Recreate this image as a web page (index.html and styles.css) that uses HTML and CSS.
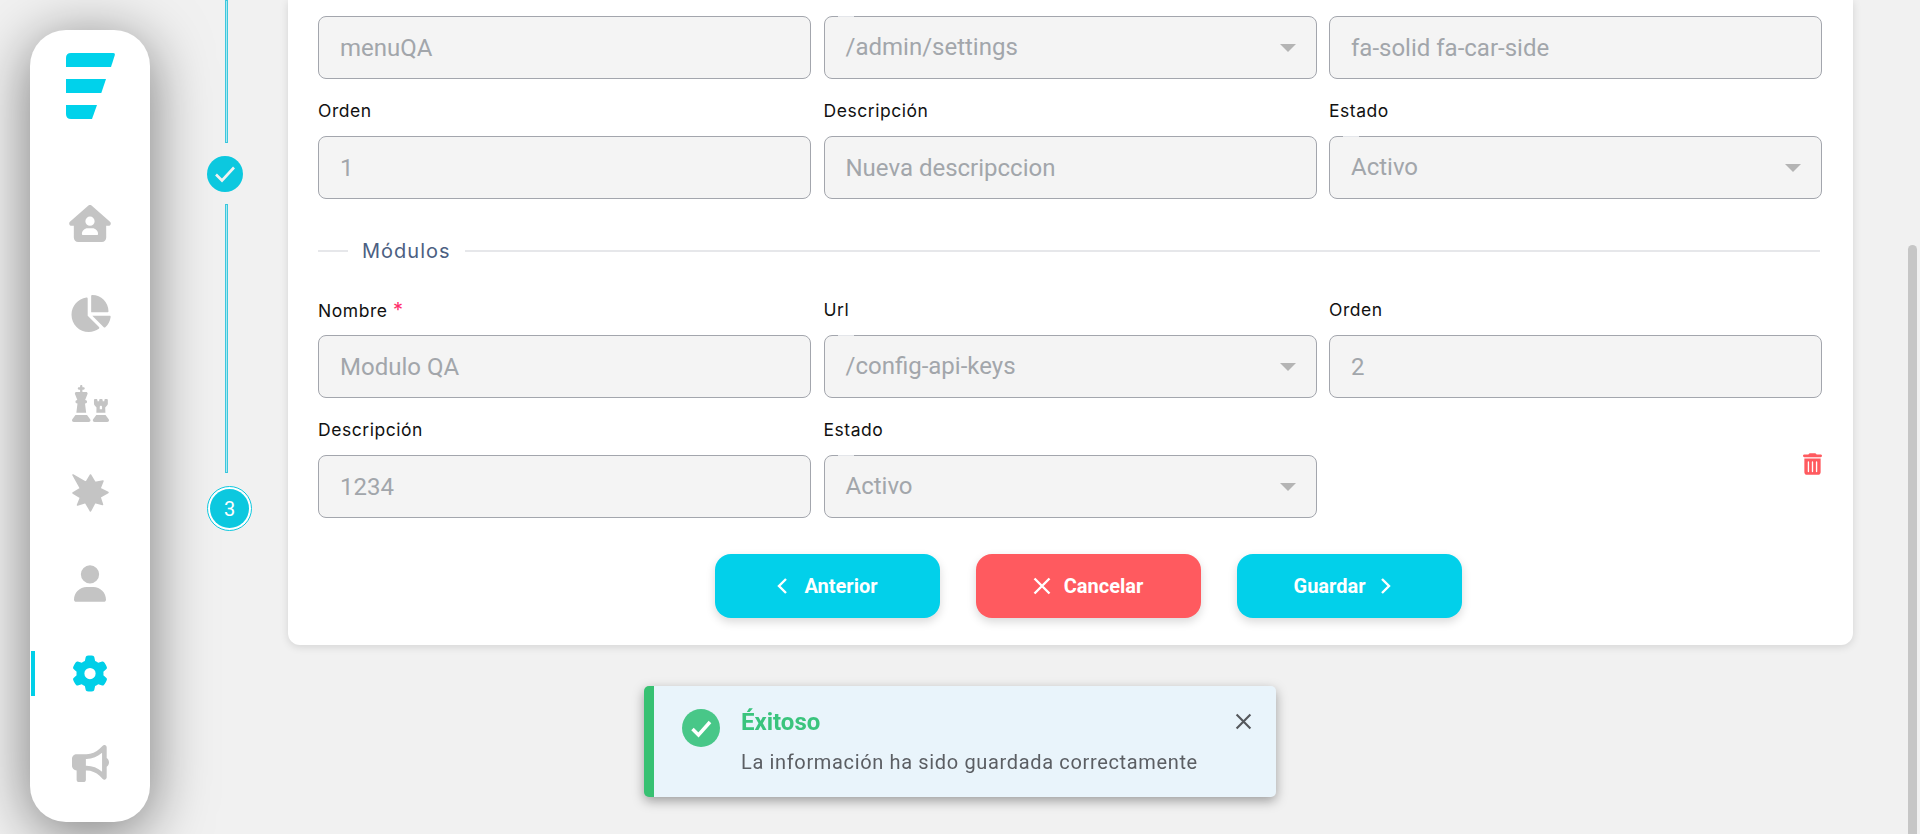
FILE: index.html
```html
<!DOCTYPE html>
<html lang="es">
<head>
  <meta charset="UTF-8">
  <meta name="viewport" content="width=device-width, initial-scale=1.0">
  <title>Configuración de menús</title>
  <link rel="stylesheet" href="styles.css">
</head>
<body>
  <div class="app">
    <!-- Menu lateral -->
    <aside class="sidebar">
      <svg class="logo" viewBox="0 0 49 66">
        <path d="M5 0H47Q49.500 0 48.700 2.500L45 14H0V5Q0 0 5 0Z"/>
        <path d="M0 26H40L35.300 40H0Z"/>
        <path d="M0 52H31L26 66H5Q0 66 0 61Z"/>
      </svg>
      <nav class="nav">
        <a class="nav-item"><svg class="icon-home" viewBox="0 0 576 512"><path d="M575.800 255.500c0 18-15 32.100-32 32.100h-32l.7 160.200c.2 35.500-28.500 64.300-64 64.300H128.100c-35.300 0-64-28.700-64-64V287.600H32c-18 0-32-14-32-32.100c0-9 3-17 10-24L266.400 8c7-7 15-8 22-8s15 2 21 7L564.800 231.500c8 7 12 15 11 24zM352 224a64 64 0 1 0 -128 0 64 64 0 1 0 128 0zm-96 96c-44.200 0-80 35.800-80 80c0 8.800 7.200 16 16 16H384c8.800 0 16-7.200 16-16c0-44.200-35.800-80-80-80H256z"/></svg></a>
        <a class="nav-item"><svg class="icon-pie" viewBox="0 0 576 512"><path d="M304 240V16.600c0-9 7-16.600 16-16.600C443.700 0 544 100.300 544 224c0 9-7.600 16-16.600 16H304zM32 272C32 150.700 122.100 50.300 239 34.300c9.200-1.300 17 6.100 17 15.400V288L412.500 444.500c6.700 6.700 6.200 17.700-1.500 23.100C371.800 495.600 323.800 512 272 512C139.500 512 32 404.600 32 272zm526.400 16c9.300 0 16.600 7.800 15.400 17c-7.700 55.900-34.600 105.600-73.900 142.300c-6 5.600-15.400 5.200-21.200-.7L320 288H558.400z"/></svg></a>
        <a class="nav-item"><svg class="icon-chess" viewBox="0 0 512 512"><path d="M144 16c0-8.800-7.200-16-16-16s-16 7.200-16 16V32H96c-8.800 0-16 7.200-16 16s7.200 16 16 16h16V96H60.200C49.100 96 40 105.100 40 116.200c0 2.500 .5 4.900 1.300 7.300L73.800 208H72c-13.300 0-24 10.700-24 24s10.700 24 24 24h4L60 384H196L180 256h4c13.300 0 24-10.700 24-24s-10.700-24-24-24h-1.800l32.500-84.500c.9-2.300 1.300-4.800 1.300-7.300c0-11.200-9.100-20.200-20.200-20.200H144V64h16c8.800 0 16-7.200 16-16s-7.200-16-16-16H144V16zM48 416L4.800 473.600C1.700 477.800 0 482.800 0 488c0 13.300 10.700 24 24 24H232c13.300 0 24-10.700 24-24c0-5.200-1.700-10.200-4.800-14.400L208 416H48zm288 0l-43.200 57.600c-3.100 4.200-4.800 9.200-4.800 14.400c0 13.300 10.700 24 24 24H488c13.300 0 24-10.700 24-24c0-5.200-1.700-10.200-4.800-14.400L464 416H336zM304 208v51.900c0 7.800 2.800 15.300 8 21.100L339.200 312 337 384H462.500l-3.300-72 28.300-30.800c5.400-5.900 8.500-13.600 8.500-21.700V208c0-8.800-7.200-16-16-16H464c-8.800 0-16 7.200-16 16v16H424V208c0-8.800-7.200-16-16-16H392c-8.800 0-16 7.200-16 16v16H352V208c0-8.800-7.200-16-16-16H320c-8.800 0-16 7.200-16 16zm80 96c0-8.800 7.200-16 16-16s16 7.200 16 16v32H384V304z"/></svg></a>
        <a class="nav-item"><svg class="icon-burst" viewBox="0 0 37 38"><path d="M1 1L14 8.500L18.500 1L23 8.500L31 7L28 14.500L36 18.500L28 23L30.500 30.500L23 28.500L18.500 37L13.500 28.500L5.500 31L8.500 23.500L1 19L8.500 14.500Z"/></svg></a>
        <a class="nav-item"><svg class="icon-user" viewBox="0 0 448 512"><path d="M224 256A128 128 0 1 0 224 0a128 128 0 1 0 0 256zm-45.700 48C79.800 304 0 383.800 0 482.300C0 498.700 13.300 512 29.700 512H418.300c16.400 0 29.700-13.300 29.700-29.700C448 383.800 368.200 304 269.700 304H178.300z"/></svg></a>
        <a class="nav-item active"><svg class="icon-gear" viewBox="0 0 512 512"><path d="M495.900 166.600c3.200 8.700 .5 18.400-6.400 24.600l-43.300 39.400c1.100 8.300 1.700 16.800 1.700 25.400s-.6 17.100-1.700 25.400l43.300 39.400c6.900 6.200 9.600 15.900 6.400 24.600c-4.400 11.900-9.700 23.300-15.800 34.300l-4.700 8.100c-6.600 11-14 21.400-22.100 31.200c-5.900 7.200-15.700 9.600-24.500 6.800l-55.700-17.700c-13.400 10.300-28.200 18.900-44 25.400l-12.500 57.100c-2 9.100-9 16.300-18.200 17.800c-13.800 2.300-28 3.500-42.500 3.500s-28.700-1.200-42.500-3.500c-9.200-1.500-16.200-8.700-18.200-17.800l-12.500-57.100c-15.800-6.500-30.600-15.100-44-25.400L83.100 425.900c-8.800 2.800-18.600 .3-24.500-6.800c-8.100-9.800-15.500-20.200-22.100-31.200l-4.700-8.100c-6.100-11-11.400-22.400-15.800-34.300c-3.200-8.700-.5-18.400 6.400-24.600l43.300-39.400C64.600 273.100 64 264.600 64 256s.6-17.100 1.700-25.400L22.400 191.200c-6.900-6.200-9.600-15.900-6.400-24.600c4.400-11.900 9.700-23.300 15.800-34.300l4.700-8.100c6.600-11 14-21.400 22.100-31.200c5.900-7.200 15.700-9.600 24.500-6.800l55.700 17.700c13.400-10.300 28.200-18.900 44-25.400l12.500-57.100c2-9.100 9-16.300 18.200-17.800C227.300 1.200 241.500 0 256 0s28.700 1.200 42.500 3.500c9.200 1.500 16.200 8.700 18.200 17.800l12.500 57.100c15.800 6.500 30.600 15.100 44 25.400l55.700-17.700c8.800-2.800 18.600-.3 24.500 6.800c8.100 9.800 15.500 20.200 22.100 31.200l4.700 8.100c6.100 11 11.400 22.400 15.800 34.300zM256 336a80 80 0 1 0 0-160 80 80 0 1 0 0 160z"/></svg></a>
        <a class="nav-item"><svg class="icon-bullhorn" viewBox="0 0 512 512"><path d="M480 32c0-12.900-7.800-24.600-19.800-29.600s-25.700-2.200-34.900 6.900L381.700 53c-48 48-113.100 75-181 75H192 160 64c-35.300 0-64 28.700-64 64v96c0 35.300 28.700 64 64 64l0 128c0 17.700 14.300 32 32 32h64c17.700 0 32-14.300 32-32V352h8.700c67.900 0 133 27 181 75l43.600 43.600c9.200 9.200 22.900 11.900 34.900 6.900s19.800-16.600 19.800-29.600V300.400c18.600-8.800 32-32.500 32-60.400s-13.400-51.600-32-60.400V32zm-64 76.700V240 371.300C357.200 317.800 280.500 288 200.700 288H192V192h8.700c79.800 0 156.500-29.800 215.300-83.300z"/></svg></a>
      </nav>
    </aside>

    <!-- Pasos -->
    <div class="stepper">
      <div class="step-line line-1"></div>
      <div class="step-done">
        <svg viewBox="0 0 24 24"><path d="M3 12.500l6 6L21 5.500"/></svg>
      </div>
      <div class="step-line line-2"></div>
      <div class="step-current"><span>3</span></div>
    </div>

    <main class="card">
      <div class="form-grid">
        <div class="field">
          <input class="input" type="text" value="menuQA" readonly>
        </div>
        <div class="field">
          <div class="input select">/admin/settings<span class="caret"></span></div>
        </div>
        <div class="field">
          <input class="input" type="text" value="fa-solid fa-car-side" readonly>
        </div>
        <div class="field">
          <label>Orden</label>
          <input class="input" type="text" value="1" readonly>
        </div>
        <div class="field">
          <label>Descripción</label>
          <input class="input" type="text" value="Nueva descripccion" readonly>
        </div>
        <div class="field">
          <label>Estado</label>
          <div class="input select">Activo<span class="caret"></span></div>
        </div>
      </div>

      <div class="divider">
        <span class="divider-start"></span>
        <span class="divider-text">Módulos</span>
        <span class="divider-end"></span>
      </div>

      <div class="form-grid">
        <div class="field">
          <label>Nombre <span class="required">*</span></label>
          <input class="input" type="text" value="Modulo QA" readonly>
        </div>
        <div class="field">
          <label>Url</label>
          <div class="input select">/config-api-keys<span class="caret"></span></div>
        </div>
        <div class="field">
          <label>Orden</label>
          <input class="input" type="text" value="2" readonly>
        </div>
        <div class="field">
          <label>Descripción</label>
          <input class="input" type="text" value="1234" readonly>
        </div>
        <div class="field">
          <label>Estado</label>
          <div class="input select">Activo<span class="caret"></span></div>
        </div>
        <div class="field field-delete">
          <svg class="trash" viewBox="0 0 448 512"><path d="M135.200 17.700C140.600 6.800 151.700 0 163.800 0H284.200c12.100 0 23.200 6.800 28.600 17.700L320 32h96c17.700 0 32 14.300 32 32s-14.300 32-32 32H32C14.300 96 0 81.700 0 64S14.300 32 32 32h96l7.200-14.300zM32 128H416V448c0 35.300-28.700 64-64 64H96c-35.300 0-64-28.700-64-64V128zm96 64c-8.800 0-16 7.200-16 16V432c0 8.800 7.200 16 16 16s16-7.200 16-16V208c0-8.800-7.200-16-16-16zm96 0c-8.800 0-16 7.200-16 16V432c0 8.800 7.200 16 16 16s16-7.200 16-16V208c0-8.800-7.200-16-16-16zm96 0c-8.800 0-16 7.200-16 16V432c0 8.800 7.200 16 16 16s16-7.200 16-16V208c0-8.800-7.200-16-16-16z"/></svg>
        </div>
      </div>

      <div class="actions">
        <button class="btn btn-prev">
          <svg viewBox="0 0 12 18"><path d="M10 2L3 9l7 7"/></svg>
          Anterior
        </button>
        <button class="btn btn-danger">
          <svg class="btn-x" viewBox="0 0 18 18"><path d="M1.500 1.500l15 15M16.500 1.500l-15 15"/></svg>
          Cancelar
        </button>
        <button class="btn btn-next">
          Guardar
          <svg viewBox="0 0 12 18"><path d="M2 2l7 7-7 7"/></svg>
        </button>
      </div>
    </main>

    <div class="scrollbar"></div>
  </div>

  <!-- Notificacion -->
  <div class="toast">
    <svg class="toast-icon" viewBox="0 0 38 38">
      <circle cx="19" cy="19" r="19"/>
      <path d="M10.500 20l6 6L28 13"/>
    </svg>
    <div class="toast-body">
      <div class="toast-title">Éxitoso</div>
      <div class="toast-text">La información ha sido guardada correctamente</div>
    </div>
    <svg class="toast-close" viewBox="0 0 16 16"><path d="M1.500 1.500l13 13M14.500 1.500l-13 13"/></svg>
  </div>
</body>
</html>
```

FILE: styles.css
```css
* {
  box-sizing: border-box;
}
body {
  margin: 0;
  background-color: #f1f1f1;
  font-family: Roboto, sans-serif;
  height: 834px;
  overflow: hidden;
}
.app {
  display: flex;
  align-items: flex-start;
  height: 834px;
}

/* Menu lateral */
.sidebar {
  width: 120px;
  height: 792px;
  margin: 30px 0 0 30px;
  padding-top: 23px;
  background-color: white;
  border-radius: 36px;
  box-shadow: 0 10px 60px rgba(0,0,0,0.5);
  flex-shrink: 0;
}
.logo {
  display: block;
  width: 49px;
  height: 66px;
  margin-left: 36px;
  fill: #00d2eb;
}
.nav {
  margin-top: 59px;
}
.nav-item {
  display: flex;
  align-items: center;
  justify-content: center;
  height: 90px;
  fill: #c4c4c4;
}
.nav-item.active {
  fill: #00cfe8;
  position: relative;
}
.nav-item.active::before {
  content: "";
  position: absolute;
  left: 1px;
  top: 23px;
  width: 4px;
  height: 45px;
  background-color: #00cfe8;
}
.icon-home { width: 42px; height: 37px; }
.icon-pie { width: 42px; height: 37px; }
.icon-chess { width: 37px; height: 37px; }
.icon-burst { width: 37px; height: 38px; stroke: #c4c4c4; stroke-width: 1.500px; stroke-linejoin: round; }
.icon-user { width: 32px; height: 37px; }
.icon-gear { width: 36px; height: 37px; }
.icon-bullhorn { width: 37px; height: 37px; }

/* Pasos */
.stepper {
  width: 138px;
  flex-shrink: 0;
}
.step-line {
  width: 3px;
  margin-left: 75px;
  background-color: #a9e7f1;
  border: 1px solid #3cc8dd;
}
.line-1 {
  height: 143px;
}
.line-2 {
  height: 269px;
  margin-top: 12px;
}
.step-done {
  width: 36px;
  height: 36px;
  margin: 13px 0 0 57px;
  border-radius: 50%;
  background-color: #0cc8df;
  display: flex;
  align-items: center;
  justify-content: center;
}
.step-done svg {
  width: 24px;
  height: 24px;
  fill: none;
  stroke: #f1f1f1;
  stroke-width: 2.600px;
}
.step-current {
  width: 45px;
  height: 45px;
  margin: 13px 0 0 57px;
  border-radius: 50%;
  border: 1px solid #0cc8df;
  padding: 2px;
  background-color: white;
}
.step-current span {
  display: flex;
  align-items: center;
  justify-content: center;
  height: 100%;
  border-radius: 50%;
  background-color: #0cc8df;
  color: white;
  font-size: 20px;
}

/* Formulario */
.card {
  width: 1565px;
  flex-shrink: 0;
  padding: 16px 31px 27px 30px;
  background-color: white;
  border-radius: 0 0 12px 12px;
  box-shadow: 0 2px 8px rgba(0,0,0,0.12);
}
.form-grid {
  display: grid;
  grid-template-columns: repeat(3, 1fr);
  column-gap: 12.500px;
  row-gap: 19px;
}
.field label {
  display: block;
  height: 24px;
  margin-bottom: 14px;
  font-family: Inter, sans-serif;
  font-size: 17.500px;
  letter-spacing: 0.550px;
  line-height: 26px;
  color: #111;
}
.required {
  color: #ff2d6b;
  font-size: 20px;
}
.input {
  display: block;
  width: 100%;
  height: 63px;
  padding: 0 21px;
  background-color: #f4f4f4;
  border: 1px solid #a3a6ad;
  border-radius: 8px;
  font-family: Roboto, sans-serif;
  font-size: 24px;
  line-height: 61px;
  color: #a2a6ab;
  outline: none;
}
.select {
  display: flex;
  align-items: center;
  justify-content: space-between;
  padding-right: 20px;
  position: relative;
}
/* hueco de la etiqueta flotante sobre el borde */
.select::before {
  content: "";
  position: absolute;
  left: 13px;
  top: -1px;
  width: 16px;
  height: 1px;
  background-color: #e4e6ea;
}
.caret {
  width: 0;
  height: 0;
  border-left: 8px solid transparent;
  border-right: 8px solid transparent;
  border-top: 8px solid #b4b4b4;
}
.divider {
  display: flex;
  align-items: center;
  gap: 14px;
  height: 24px;
  margin: 40px 2px 34px 0;
}
.divider-start {
  width: 30px;
  height: 2px;
  background-color: #e6e7ea;
}
.divider-end {
  flex: 1;
  height: 2px;
  background-color: #e6e7ea;
}
.divider-text {
  font-family: Inter, sans-serif;
  font-size: 20px;
  letter-spacing: 1px;
  color: #4c5f82;
}
.field-delete {
  display: flex;
  justify-content: flex-end;
  align-items: flex-start;
  padding: 36px 0 0 0;
}
.trash {
  width: 19px;
  height: 22px;
  fill: #ff5a5f;
}

/* Botones */
.actions {
  display: flex;
  justify-content: center;
  gap: 36px;
  margin: 36px 0 0 36px;
}
.btn {
  display: flex;
  align-items: center;
  justify-content: center;
  gap: 13px;
  width: 225px;
  height: 64px;
  border: none;
  border-radius: 16px;
  background-color: #02d0ea;
  box-shadow: 0 4px 10px rgba(0,0,0,0.15);
  font-family: Roboto, sans-serif;
  font-size: 20px;
  font-weight: 700;
  color: white;
  cursor: pointer;
}
.btn svg {
  width: 12px;
  height: 18px;
  fill: none;
  stroke: white;
  stroke-width: 2.400px;
}
.btn svg.btn-x {
  width: 18px;
  height: 18px;
}
.btn-prev {
  gap: 16px;
}
.btn-next {
  gap: 15px;
  padding-right: 18px;
}
.btn-danger {
  background-color: #ff5a5f;
}

.scrollbar {
  width: 9px;
  height: 589px;
  margin: 245px 3px 0 auto;
  border-radius: 5px 5px 0 0;
  background-color: #c6c6c6;
}

/* Notificacion */
.toast {
  position: fixed;
  left: 644px;
  top: 686px;
  width: 632px;
  height: 111px;
  display: flex;
  align-items: flex-start;
  padding: 20px 24px 0 28px;
  background-color: #e9f4fb;
  border-left: 10px solid #37c172;
  border-radius: 5px;
  box-shadow: 0 4px 12px rgba(0,0,0,0.35);
}
.toast-icon {
  width: 38px;
  height: 38px;
  margin-top: 3px;
  flex-shrink: 0;
  fill: #48c788;
}
.toast-icon path {
  fill: none;
  stroke: white;
  stroke-width: 3.500px;
}
.toast-body {
  margin-left: 21px;
  flex: 1;
}
.toast-title {
  height: 30px;
  font-size: 24px;
  font-weight: 700;
  line-height: 32px;
  color: #3ac47d;
}
.toast-text {
  margin-top: 11px;
  font-size: 20px;
  letter-spacing: 0.650px;
  line-height: 30px;
  color: #5b5e63;
}
.toast-close {
  width: 17px;
  height: 17px;
  margin-top: 7px;
  fill: none;
  stroke: #55585c;
  stroke-width: 2px;
}
```
